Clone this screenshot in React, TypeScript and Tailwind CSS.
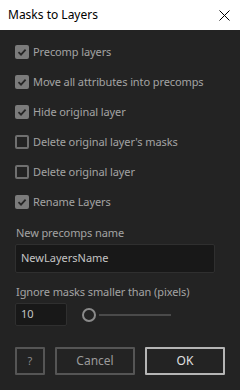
import React from "react";

const font = { fontFamily: '"Noto Sans", "Open Sans", sans-serif' };

function Check({ checked, label }: { checked: boolean; label: string }) {
  return (
    <div className="flex items-center h-[14px]">
      {checked ? (
        <div className="w-[14px] h-[14px] rounded-[2px] bg-[#7b7b7b] flex items-center justify-center">
          <svg width="10" height="10" viewBox="0 0 10 10">
            <path d="M1.5 5.2 L4 7.6 L8.6 2.6" fill="none" stroke="#262626" strokeWidth="1.8" />
          </svg>
        </div>
      ) : (
        <div className="w-[14px] h-[14px] rounded-[2px] border-2 border-[#6f6f6f]" />
      )}
      <span className="ml-[4px] text-[11px] tracking-[-0.1px] leading-[16px] text-[#a3a3a3]">{label}</span>
    </div>
  );
}

export default function App() {
  return (
    <div className="w-[240px] h-[390px] bg-[#232323] flex flex-col" style={font}>
      <div className="h-[30px] bg-white flex items-center justify-between pl-[8px] pr-[10px]">
        <span className="text-[12px] text-black">Masks to Layers</span>
        <svg width="11" height="11" viewBox="0 0 11 11">
          <path d="M0.5 0.5 L10.5 10.5 M10.5 0.5 L0.5 10.5" stroke="#000" strokeWidth="1" />
        </svg>
      </div>
      <div className="flex flex-col px-[15px]">
        <div className="flex flex-col gap-[16px] pt-[15px]">
          <Check checked label="Precomp layers" />
          <Check checked label="Move all attributes into precomps" />
          <Check checked label="Hide original layer" />
          <Check checked={false} label="Delete original layer's masks" />
          <Check checked={false} label="Delete original layer" />
          <Check checked label="Rename Layers" />
        </div>
        <div className="mt-[16px] h-[16px] text-[11px] tracking-[-0.1px] leading-[16px] text-[#a3a3a3] pl-[1px]">New precomps name</div>
        <div className="mt-[3px] h-[29px] w-[200px] bg-[#181818] border border-[#2f2f2f] rounded-[2px] flex items-center px-[5px] text-[11px] text-[#c4c4c4]">
          NewLayersName
        </div>
        <div className="mt-[11px] h-[16px] text-[11px] tracking-[-0.1px] leading-[16px] text-[#a3a3a3] pl-[1px]">Ignore masks smaller than (pixels)</div>
        <div className="mt-[3px] flex items-center h-[23px]">
          <div className="w-[52px] h-[23px] bg-[#181818] border border-[#2f2f2f] rounded-[2px] flex items-center px-[5px] text-[11px] text-[#c4c4c4]">
            10
          </div>
          <div className="ml-[15px] w-[14px] h-[14px] rounded-full border-2 border-[#8a8a8a] bg-[#232323]" />
          <div className="ml-[3px] w-[72px] h-[2px] bg-[#4a4a4a]" />
        </div>
        <div className="mt-[21px] flex h-[28px]">
          <div className="w-[30px] h-[28px] border-2 border-[#555555] rounded-[1px] flex items-center justify-center text-[11px] text-[#8a8a8a]">?</div>
          <div className="ml-[10px] w-[80px] h-[28px] border-2 border-[#555555] rounded-[1px] flex items-center justify-center text-[12px] text-[#9a9a9a]">Cancel</div>
          <div className="ml-[10px] w-[80px] h-[28px] border-2 border-[#b5b5b5] rounded-[1px] flex items-center justify-center text-[12px] text-[#e0e0e0]">OK</div>
        </div>
      </div>
    </div>
  );
}
